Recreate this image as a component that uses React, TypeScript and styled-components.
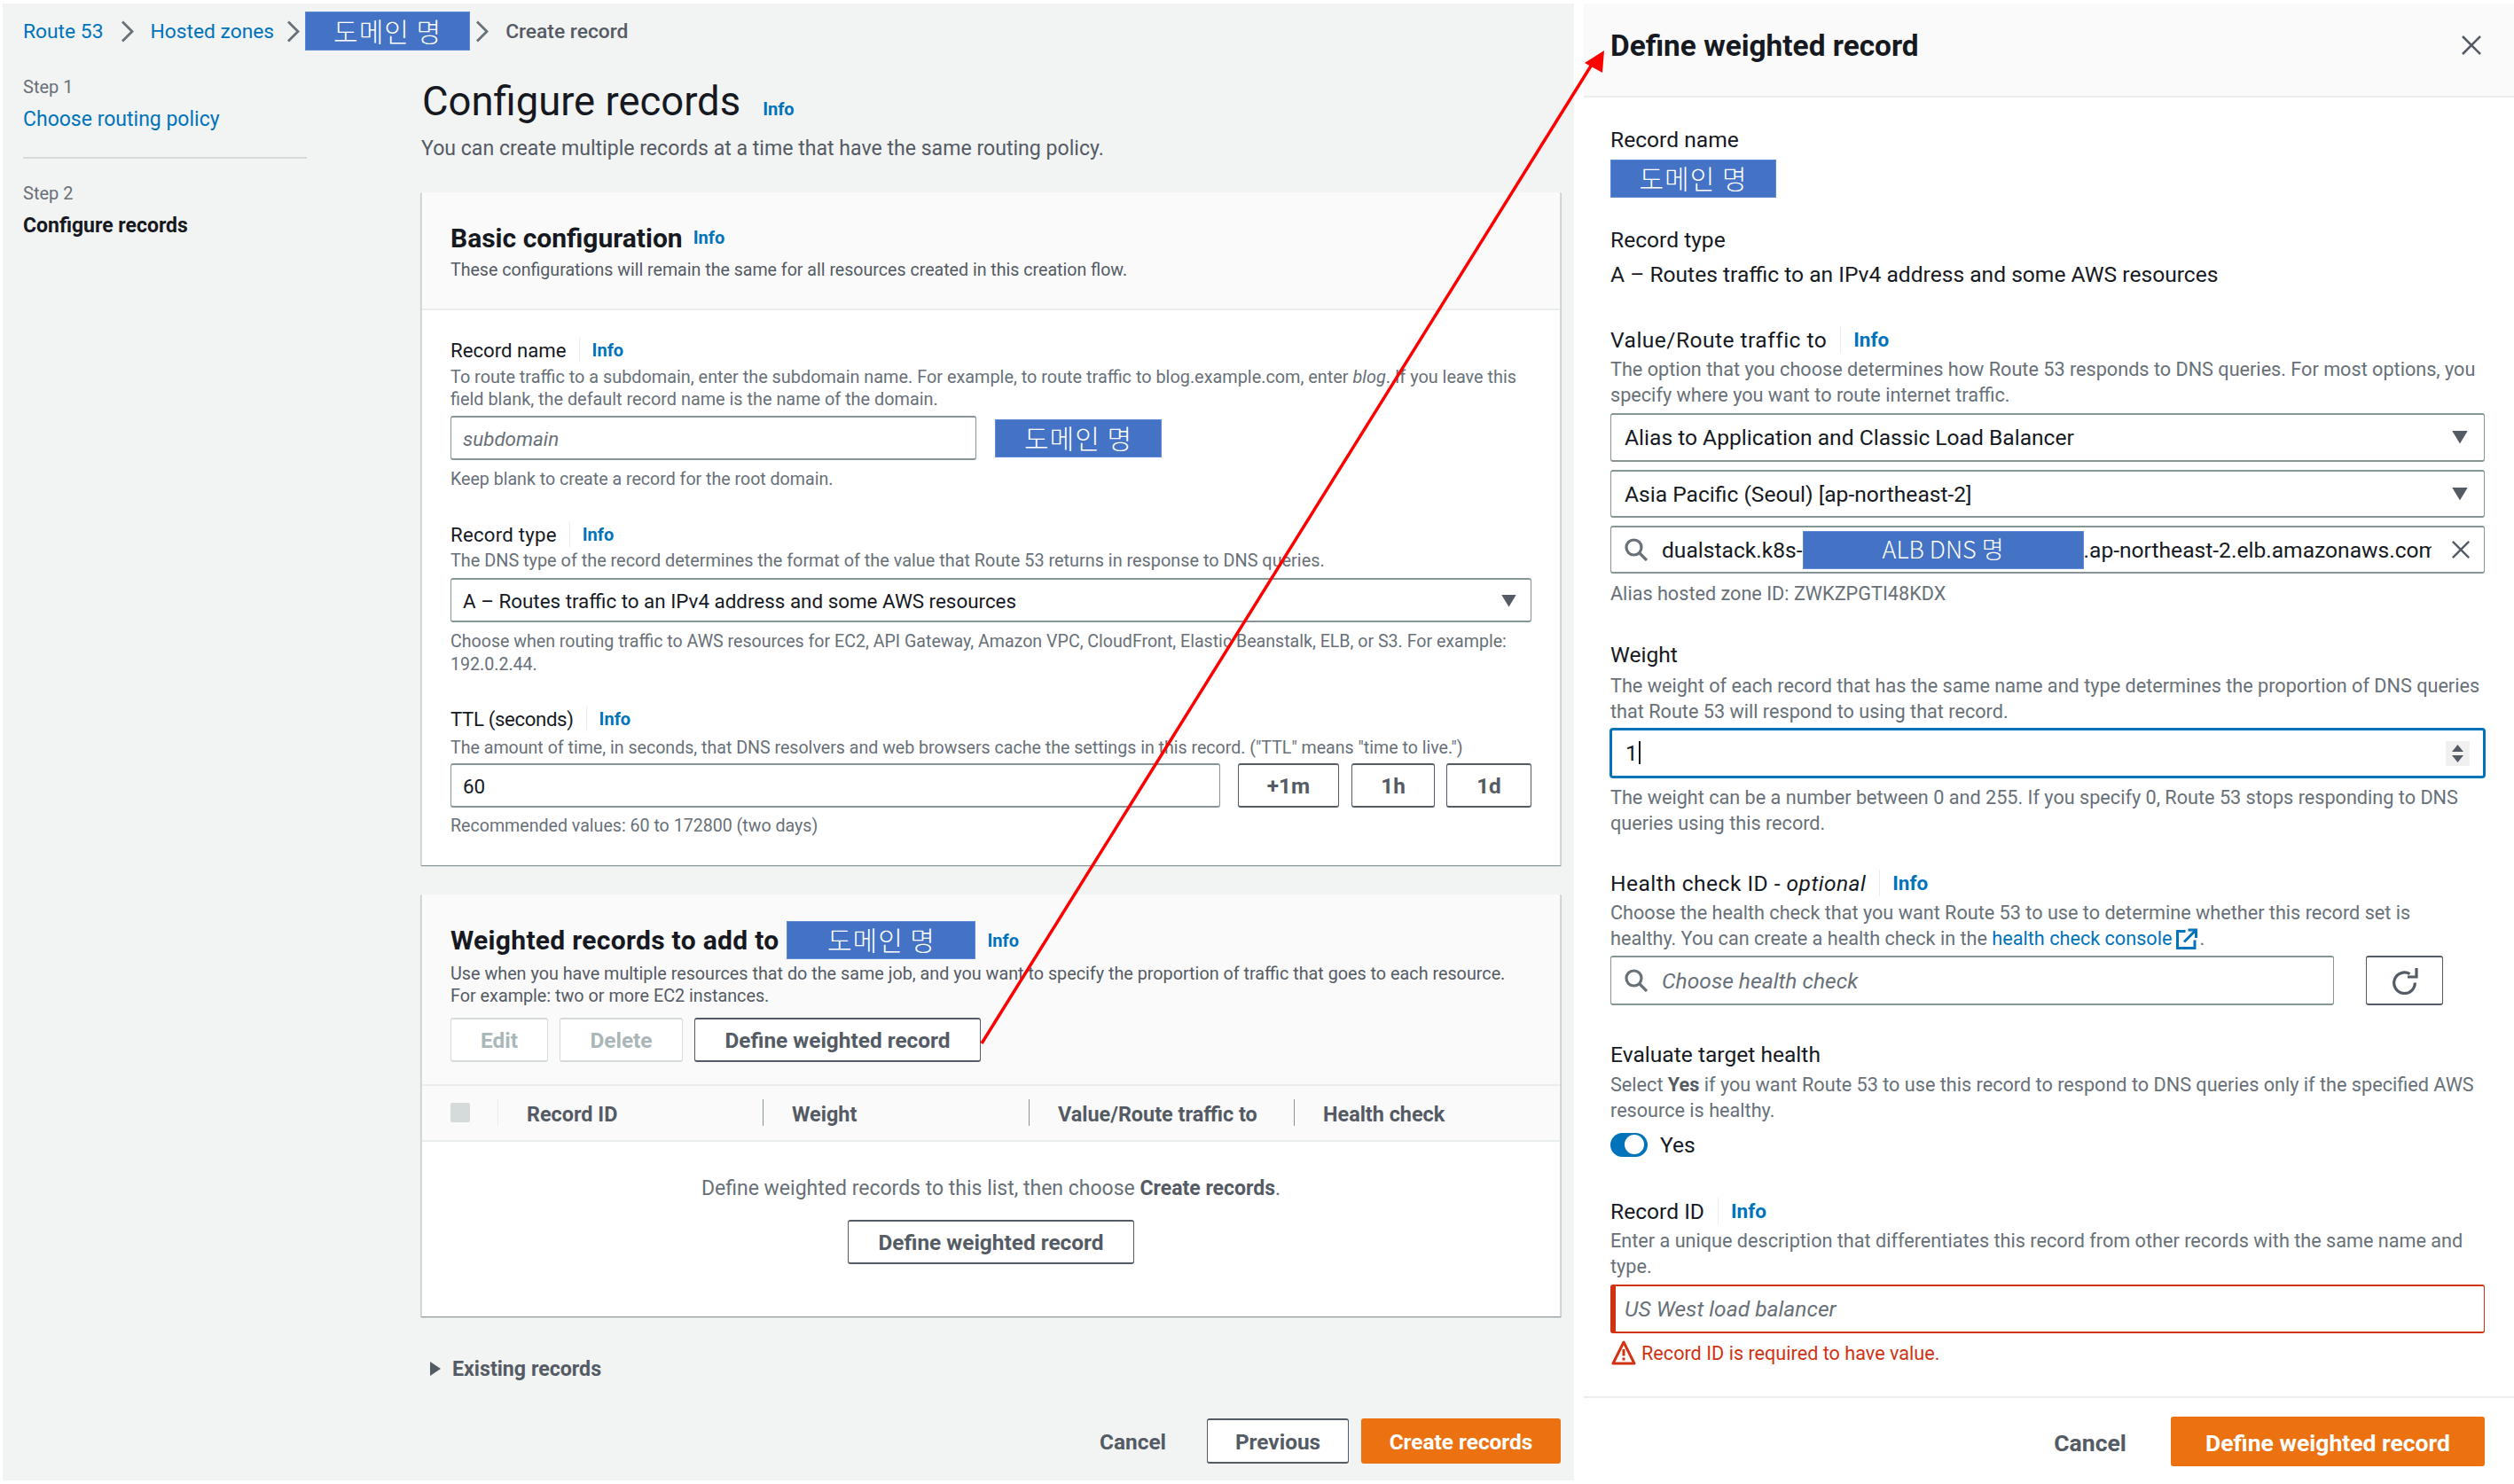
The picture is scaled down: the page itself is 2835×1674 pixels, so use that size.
import styled, { createGlobalStyle } from 'styled-components';

const GlobalStyle = createGlobalStyle`
  html, body {
    margin: 0;
    padding: 0;
    background: #fff;
  }
  * {
    box-sizing: border-box;
  }
`;

const FONT = `Roboto, "Noto Sans CJK KR", sans-serif`;
const COLORS = {
  ink: '#16191f',
  grey: '#687078',
  button: '#545b64',
  link: '#0073bb',
  border: '#879596',
  line: '#eaeded',
  orange: '#ec7211',
  red: '#d13212',
};

const Page = styled.div`
  position: relative;
  width: 2835px;
  height: 1674px;
  overflow: hidden;
  display: flex;
  padding: 4px 0 4px 3px;
  font-family: ${FONT};
  color: ${COLORS.ink};
`;

const Console = styled.div`
  width: 1772px;
  margin-right: 11px;
  padding: 9px 15px 0 23px;
  background: #f2f3f3;
`;

const Breadcrumbs = styled.nav`
  display: flex;
  align-items: center;
  height: 44px;
  font-size: 22.8px;
  color: ${COLORS.button};
`;

const Crumb = styled.a`
  color: ${COLORS.link};
`;

const CrumbCurrent = styled.span`
  margin-left: 19px;
  font-weight: 500;
  color: ${COLORS.button};
`;

const Redact = styled.span<{ $w: number; $h?: number; $size?: number }>`
  display: inline-flex;
  flex: none;
  align-items: center;
  justify-content: center;
  width: ${p => p.$w}px;
  height: ${p => p.$h ?? 43}px;
  padding-bottom: 3px;
  background: #4472c4;
  border: 1px solid #5a8ad8;
  color: #fff;
  font-family: "Noto Sans CJK KR", sans-serif;
  font-size: ${p => p.$size ?? 30}px;
  font-weight: 300;
  letter-spacing: 1px;
`;

const Columns = styled.div`
  display: flex;
  margin-top: 23px;
`;

const Steps = styled.aside`
  width: 320px;
  margin-right: 129px;
  padding-top: 3px;
`;

const StepBlock = styled.div<{ $divided?: boolean }>`
  padding-bottom: ${p => (p.$divided ? '27px' : '0')};
  margin-bottom: ${p => (p.$divided ? '24px' : '0')};
  border-bottom: ${p => (p.$divided ? `2px solid #d5dbdb` : 'none')};
`;

const StepNumber = styled.div`
  height: 30px;
  line-height: 30px;
  font-size: 20px;
  color: ${COLORS.grey};
`;

const StepName = styled.div<{ $current?: boolean }>`
  margin-top: 7px;
  height: 30px;
  line-height: 30px;
  font-size: 23px;
  font-weight: ${p => (p.$current ? 700 : 400)};
  color: ${p => (p.$current ? COLORS.ink : COLORS.link)};
`;

const Main = styled.main`
  width: 1285px;
`;

const PageTitle = styled.div`
  display: flex;
  align-items: baseline;
  height: 50px;
  line-height: 50px;
  font-size: 45.4px;
  margin: 10px 0 13px;
  padding-left: 1px;
`;

const PageSub = styled.p`
  margin: 0;
  height: 30px;
  line-height: 30px;
  font-size: 23.1px;
  color: ${COLORS.button};
`;

const Card = styled.section<{ $mt: number }>`
  margin-top: ${p => p.$mt}px;
  background: #fff;
  border-left: 1px solid #d5dbdb;
  border-right: 1px solid #d5dbdb;
  box-shadow: 0 1px 1px 0 rgba(0, 28, 36, 0.3), 1px 1px 1px 0 rgba(0, 28, 36, 0.1), -1px 1px 1px 0 rgba(0, 28, 36, 0.1);
`;

const CardHead = styled.header<{ $pt: number; $pb: number }>`
  padding: ${p => p.$pt}px 32px ${p => p.$pb}px;
  background: #fafafa;
  border-bottom: 2px solid ${COLORS.line};
`;

const CardTitle = styled.div<{ $track?: number }>`
  display: flex;
  align-items: center;
  height: 44px;
  font-size: 30px;
  font-weight: 700;
  letter-spacing: ${p => p.$track ?? 0}px;
`;

const CardDesc = styled.p<{ $mt?: number; $size?: number }>`
  margin: ${p => p.$mt ?? 2}px 0 0;
  line-height: 25.5px;
  font-size: ${p => p.$size ?? 19.6}px;
  color: ${COLORS.button};
`;

const CardBody = styled.div`
  padding: 30px 32px 31px;
`;

const InfoLink = styled.a<{ $size?: number; $ml?: number }>`
  margin-left: ${p => p.$ml ?? 14}px;
  font-size: ${p => p.$size ?? 20}px;
  font-weight: 700;
  letter-spacing: 0;
  color: ${COLORS.link};
`;

const Label = styled.div<{ $mt?: number; $track?: number }>`
  display: flex;
  align-items: center;
  height: 30px;
  margin-top: ${p => p.$mt ?? 0}px;
  font-size: 22.2px;
  letter-spacing: ${p => p.$track ?? 0}px;
`;

const LabelRule = styled.span`
  width: 1px;
  height: 28px;
  margin-left: 14px;
  background: #eaeded;
`;

const Help = styled.p<{ $mt?: number; $size?: number }>`
  margin: ${p => p.$mt ?? 2}px 0 0;
  line-height: 25.9px;
  font-size: ${p => p.$size ?? 19.6}px;
  color: ${COLORS.grey};
`;

const ControlBox = styled.div<{ $h?: number; $w?: number; $mt?: number }>`
  display: flex;
  align-items: center;
  flex: none;
  height: ${p => p.$h ?? 50}px;
  width: ${p => (p.$w ? `${p.$w}px` : '100%')};
  margin-top: ${p => p.$mt ?? 6}px;
  padding: 2px 13px 0;
  background: #fff;
  border: 1px solid ${COLORS.border};
  border-width: 2px 1px;
  border-radius: 3px;
  font-size: 22.4px;
`;

const ControlValue = styled.span`
  flex: 1;
  white-space: nowrap;
`;

const Placeholder = styled.span`
  flex: 1;
  white-space: nowrap;
  font-style: italic;
  color: ${COLORS.grey};
`;

const Row = styled.div<{ $gap?: number; $mt?: number }>`
  display: flex;
  align-items: center;
  gap: ${p => p.$gap ?? 0}px;
  margin-top: ${p => p.$mt ?? 0}px;
`;

const Btn = styled.button<{ $w: number; $h?: number; $kind?: 'normal' | 'off' | 'primary' | 'text'; $ml?: number; $mt?: number; $size?: number }>`
  flex: none;
  display: inline-flex;
  align-items: center;
  justify-content: center;
  width: ${p => p.$w}px;
  height: ${p => p.$h ?? 50}px;
  margin-left: ${p => p.$ml ?? 0}px;
  margin-top: ${p => p.$mt ?? 0}px;
  padding: 2px 0 0;
  font-family: ${FONT};
  font-size: ${p => p.$size ?? 24.4}px;
  font-weight: 700;
  border-radius: 3px;
  border: 1px solid transparent;
  border-width: 2px 1px;
  ${p => (p.$kind ?? 'normal') === 'normal' && `color: ${COLORS.button}; background: #fff; border-color: ${COLORS.button};`}
  ${p => p.$kind === 'off' && `color: #aab7b8; background: #fff; border-color: #d5dbdb;`}
  ${p => p.$kind === 'primary' && `color: #fff; background: ${COLORS.orange}; border-color: ${COLORS.orange};`}
  ${p => p.$kind === 'text' && `color: ${COLORS.button}; background: transparent;`}
`;

const TableHead = styled.div`
  display: flex;
  align-items: center;
  height: 63px;
  padding-left: 32px;
  background: #fafafa;
  border-bottom: 2px solid ${COLORS.line};
`;

const FakeCheck = styled.span`
  width: 22px;
  height: 22px;
  background: #d5dbdb;
  border-radius: 2px;
`;

const Column = styled.div<{ $w: number; $light?: boolean }>`
  display: flex;
  align-items: center;
  width: ${p => p.$w}px;
  height: 30px;
  padding: 4px 0 0 32px;
  margin-left: ${p => (p.$light ? '31px' : '0')};
  border-left: 1px solid ${p => (p.$light ? '#eaeded' : COLORS.border)};
  font-size: 23.4px;
  font-weight: 700;
  color: ${COLORS.button};
`;

const EmptyState = styled.div`
  display: flex;
  flex-direction: column;
  align-items: center;
  height: 197px;
  padding-top: 38px;
`;

const EmptyText = styled.div`
  height: 30px;
  line-height: 30px;
  margin-bottom: 20px;
  font-size: 23px;
  color: ${COLORS.grey};
  b {
    color: ${COLORS.button};
  }
`;

const Expander = styled.div`
  display: flex;
  align-items: center;
  gap: 13px;
  margin-top: 44px;
  padding-left: 10px;
  height: 30px;
  font-size: 23.2px;
  font-weight: 700;
  color: ${COLORS.button};
`;

const Actions = styled.div`
  display: flex;
  justify-content: flex-end;
  align-items: center;
  margin-top: 41px;
`;

const Drawer = styled.aside`
  width: 1049px;
  height: 100%;
  background: #fff;
`;

const DrawerHead = styled.header`
  display: flex;
  align-items: center;
  justify-content: space-between;
  height: 106px;
  padding: 0 36px 10px 30px;
  background: #fafafa;
  border-bottom: 2px solid ${COLORS.line};
  font-size: 33.4px;
  font-weight: 700;
`;

const DrawerBody = styled.div`
  padding: 31px 33px 0 30px;
  border-bottom: 2px solid ${COLORS.line};
  height: 1467px;
`;

const DLabel = styled.div<{ $mt?: number; $track?: number; $lift?: boolean }>`
  display: flex;
  align-items: center;
  height: 34px;
  margin-top: ${p => p.$mt ?? 0}px;
  padding-bottom: ${p => (p.$lift ? '2px' : '0')};
  font-size: 24.6px;
  letter-spacing: ${p => p.$track ?? 0}px;
`;

const DRule = styled.span`
  width: 1px;
  height: 30px;
  margin-left: 15px;
  background: #eaeded;
`;

const DHelp = styled.p<{ $mt?: number }>`
  margin: ${p => p.$mt ?? 2}px 0 0;
  line-height: 29px;
  font-size: 21.65px;
  color: ${COLORS.grey};
  white-space: nowrap;
  b {
    color: ${COLORS.button};
  }
  a {
    color: ${COLORS.link};
  }
`;

const DValue = styled.div`
  height: 34px;
  line-height: 34px;
  margin-top: 5px;
  font-size: 24.6px;
`;

const DControl = styled.div<{ $w?: number; $mt?: number; $state?: 'normal' | 'focus' | 'error'; $h?: number }>`
  display: flex;
  align-items: center;
  flex: none;
  height: ${p => p.$h ?? 55}px;
  width: ${p => (p.$w ? `${p.$w}px` : '100%')};
  margin-top: ${p => p.$mt ?? 5}px;
  padding: 0 15px;
  background: #fff;
  border-style: solid;
  border-width: 2px 1px;
  border-color: ${COLORS.border};
  border-radius: 3px;
  font-size: 24.6px;
  ${p => p.$state === 'focus' && `border: 3px solid ${COLORS.link}; border-radius: 4px; margin-left: -1px; width: calc(100% + 2px);`}
  ${p => p.$state === 'error' && `border-color: ${COLORS.red}; border-left-width: 6px; padding-left: 10px;`}
`;

const Clip = styled.span`
  display: block;
  width: 392px;
  overflow: hidden;
  white-space: nowrap;
  flex: none;
`;

const Caret = styled.span`
  display: inline-block;
  width: 2px;
  height: 26px;
  margin-left: 1px;
  vertical-align: -4px;
  background: ${COLORS.ink};
`;

const Spinner = styled.span`
  display: flex;
  flex-direction: column;
  align-items: center;
  justify-content: center;
  gap: 4px;
  width: 27px;
  height: 28px;
  background: #f0f0f0;
`;

const ToggleRow = styled.div`
  display: flex;
  align-items: center;
  gap: 14px;
  height: 28px;
  margin-top: 10px;
  font-size: 24.6px;
`;

const Toggle = styled.span`
  display: flex;
  align-items: center;
  justify-content: flex-end;
  width: 42px;
  height: 27px;
  padding-right: 4px;
  border-radius: 14px;
  background: ${COLORS.link};
`;

const ToggleKnob = styled.span`
  width: 22px;
  height: 22px;
  border-radius: 50%;
  background: #fff;
`;

const ErrorRow = styled.div`
  display: flex;
  align-items: center;
  gap: 6px;
  height: 30px;
  margin: 7px 0 0 1px;
  font-size: 21.65px;
  color: ${COLORS.red};
`;

const DrawerFoot = styled.footer`
  display: flex;
  justify-content: flex-end;
  align-items: center;
  padding: 21px 33px 0 0;
`;

const ArrowLayer = styled.svg`
  position: absolute;
  left: 0;
  top: 0;
  pointer-events: none;
`;

const Chevron = ({ ml = 0, mr = 0 }: { ml?: number; mr?: number }) => (
  <svg width="15" height="25" viewBox="0 0 15 25" style={{ marginLeft: ml, marginRight: mr, flex: 'none' }}>
    <path d="M2 1.5l11 11-11 11" fill="none" stroke="#687078" strokeWidth="2.8" />
  </svg>
);

const Triangle = ({ size = 17, mr = 3 }: { size?: number; mr?: number }) => (
  <svg width={size} height={size * 0.8} viewBox="0 0 17 14" style={{ marginRight: mr }}>
    <path d="M0 0h17L8.5 14z" fill="#545b64" />
  </svg>
);

const SearchIcon = () => (
  <svg width="26" height="26" viewBox="0 0 26 26" style={{ flex: 'none', marginRight: 16 }}>
    <circle cx="10.5" cy="10.5" r="8.5" fill="none" stroke="#687078" strokeWidth="3.2" />
    <path d="M16.5 16.5L25 25" stroke="#687078" strokeWidth="3.2" />
  </svg>
);

const CloseIcon = ({ size = 24, ml = 0 }: { size?: number; ml?: number | 'auto' }) => (
  <svg width={size} height={size} viewBox="0 0 24 24" style={{ flex: 'none', marginLeft: ml }}>
    <path d="M2 2l20 20M22 2L2 22" fill="none" stroke="#545b64" strokeWidth="2.6" />
  </svg>
);

const RefreshIcon = () => (
  <svg width="30" height="30" viewBox="0 0 30 30">
    <path d="M20.5 6.6A11.8 11.8 0 1 0 26.3 16.5" fill="none" stroke="#545b64" strokeWidth="3.2" />
    <path d="M18 10h10V0" fill="none" stroke="#545b64" strokeWidth="3.2" />
  </svg>
);

const ExternalIcon = () => (
  <svg width="24" height="24" viewBox="0 0 24 24" style={{ margin: '0 2px -5px 5px' }}>
    <path d="M10.5 3.5H1.5v19h19.5v-9" fill="none" stroke="#0073bb" strokeWidth="3" />
    <path d="M9 15.5L21 3.5M13.5 2h9v9" fill="none" stroke="#0073bb" strokeWidth="3" />
  </svg>
);

const WarningIcon = () => (
  <svg width="28" height="28" viewBox="0 0 28 28" style={{ flex: 'none' }}>
    <path d="M14 2L2 26h24z" fill="none" stroke="#d13212" strokeWidth="3" strokeLinejoin="round" />
    <path d="M14 10v7.5M14 19.5v3" stroke="#d13212" strokeWidth="3" />
  </svg>
);

const Domain = styled(Redact).attrs({ children: '도메인 명' })``;

export default function App() {
  return (
    <Page>
      <GlobalStyle />
      <Console>
        <Breadcrumbs>
          <Crumb>Route 53</Crumb>
          <Chevron ml={20} mr={18} />
          <Crumb>Hosted zones</Crumb>
          <Chevron ml={14} mr={6} />
          <Domain $w={186} $h={44} />
          <Chevron ml={6} />
          <CrumbCurrent>Create record</CrumbCurrent>
        </Breadcrumbs>
        <Columns>
          <Steps>
            <StepBlock $divided>
              <StepNumber>Step 1</StepNumber>
              <StepName>Choose routing policy</StepName>
            </StepBlock>
            <StepNumber>Step 2</StepNumber>
            <StepName $current>Configure records</StepName>
          </Steps>
          <Main>
            <PageTitle>
              Configure records
              <InfoLink $ml={25}>Info</InfoLink>
            </PageTitle>
            <PageSub>You can create multiple records at a time that have the same routing policy.</PageSub>

            <Card $mt={34}>
              <CardHead $pt={29} $pb={30}>
                <CardTitle>
                  Basic configuration
                  <InfoLink $ml={12}>Info</InfoLink>
                </CardTitle>
                <CardDesc>These configurations will remain the same for all resources created in this creation flow.</CardDesc>
              </CardHead>
              <CardBody>
                <Label>
                  Record name
                  <LabelRule />
                  <InfoLink>Info</InfoLink>
                </Label>
                <Help $size={19.85} $mt={3}>
                  To route traffic to a subdomain, enter the subdomain name. For example, to route traffic to blog.example.com, enter <i>blog</i>. If you leave this field blank, the default record name is the name of the domain.
                </Help>
                <Row $gap={21} $mt={5}>
                  <ControlBox $w={593} $mt={0}>
                    <Placeholder>subdomain</Placeholder>
                  </ControlBox>
                  <Domain $w={188} />
                </Row>
                <Help $mt={9}>Keep blank to create a record for the root domain.</Help>

                <Label $mt={34} $track={0.25}>
                  Record type
                  <LabelRule />
                  <InfoLink>Info</InfoLink>
                </Label>
                <Help $size={19.85}>The DNS type of the record determines the format of the value that Route 53 returns in response to DNS queries.</Help>
                <ControlBox>
                  <ControlValue>A – Routes traffic to an IPv4 address and some AWS resources</ControlValue>
                  <Triangle />
                </ControlBox>
                <Help $mt={9}>
                  Choose when routing traffic to AWS resources for EC2, API Gateway, Amazon VPC, CloudFront, Elastic Beanstalk, ELB, or S3. For example: 192.0.2.44.
                </Help>

                <Label $mt={33} $track={-0.35}>
                  TTL (seconds)
                  <LabelRule />
                  <InfoLink>Info</InfoLink>
                </Label>
                <Help $mt={5}>The amount of time, in seconds, that DNS resolvers and web browsers cache the settings in this record. ("TTL" means "time to live.")</Help>
                <Row $mt={4}>
                  <ControlBox $w={868} $mt={0}>
                    <ControlValue>60</ControlValue>
                  </ControlBox>
                  <Btn $w={114} $ml={20}>+1m</Btn>
                  <Btn $w={94} $ml={14}>1h</Btn>
                  <Btn $w={96} $ml={13}>1d</Btn>
                </Row>
                <Help $mt={8}>Recommended values: 60 to 172800 (two days)</Help>
              </CardBody>
            </Card>

            <Card $mt={33}>
              <CardHead $pt={30} $pb={25}>
                <CardTitle $track={0.3}>
                  Weighted records to add to
                  <Domain $w={213} style={{ marginLeft: 9 }} />
                  <InfoLink $ml={13}>Info</InfoLink>
                </CardTitle>
                <CardDesc $mt={3} $size={19.78}>
                  Use when you have multiple resources that do the same job, and you want to specify the proportion of traffic that goes to each resource.
                  <br />
                  For example: two or more EC2 instances.
                </CardDesc>
                <Row $mt={11}>
                  <Btn $w={110} $kind="off">Edit</Btn>
                  <Btn $w={139} $kind="off" $ml={13}>Delete</Btn>
                  <Btn $w={323} $ml={13}>Define weighted record</Btn>
                </Row>
              </CardHead>
              <TableHead>
                <FakeCheck />
                <Column $w={299} $light>Record ID</Column>
                <Column $w={300}>Weight</Column>
                <Column $w={299}>Value/Route traffic to</Column>
                <Column $w={270}>Health check</Column>
              </TableHead>
              <EmptyState>
                <EmptyText>
                  Define weighted records to this list, then choose <b>Create records</b>.
                </EmptyText>
                <Btn $w={323}>Define weighted record</Btn>
              </EmptyState>
            </Card>

            <Expander>
              <svg width="12" height="16" viewBox="0 0 12 16">
                <path d="M0 0l12 8-12 8z" fill="#545b64" />
              </svg>
              Existing records
            </Expander>

            <Actions>
              <Btn $w={71} $h={51} $kind="text">Cancel</Btn>
              <Btn $w={160} $h={51} $ml={48}>Previous</Btn>
              <Btn $w={225} $h={51} $kind="primary" $ml={14}>Create records</Btn>
            </Actions>
          </Main>
        </Columns>
      </Console>

      <Drawer>
        <DrawerHead>
          Define weighted record
          <CloseIcon />
        </DrawerHead>
        <DrawerBody>
          <DLabel $lift>Record name</DLabel>
          <Row $mt={5}>
            <Domain $w={187} />
          </Row>

          <DLabel $mt={31} $lift>Record type</DLabel>
          <DValue>A – Routes traffic to an IPv4 address and some AWS resources</DValue>

          <DLabel $mt={39} $track={0.45}>
            Value/Route traffic to
            <DRule />
            <InfoLink $size={22.5}>Info</InfoLink>
          </DLabel>
          <DHelp>
            The option that you choose determines how Route 53 responds to DNS queries. For most options, you
            <br />
            specify where you want to route internet traffic.
          </DHelp>
          <DControl $mt={6}>
            <ControlValue>Alias to Application and Classic Load Balancer</ControlValue>
            <Triangle size={18} />
          </DControl>
          <DControl $mt={9} $h={54}>
            <ControlValue>Asia Pacific (Seoul) [ap-northeast-2]</ControlValue>
            <Triangle size={18} />
          </DControl>
          <DControl $mt={9} $h={54}>
            <SearchIcon />
            <span>dualstack.k8s-</span>
            <Redact $w={317} $size={27} style={{ letterSpacing: 0 }}>ALB DNS 명</Redact>
            <Clip>.ap-northeast-2.elb.amazonaws.com</Clip>
            <CloseIcon size={22} ml="auto" />
          </DControl>
          <DHelp $mt={8}>Alias hosted zone ID: ZWKZPGTI48KDX</DHelp>

          <DLabel $mt={38} $lift>Weight</DLabel>
          <DHelp $mt={3}>
            The weight of each record that has the same name and type determines the proportion of DNS queries
            <br />
            that Route 53 will respond to using that record.
          </DHelp>
          <DControl $h={57} $state="focus" $mt={4}>
            <ControlValue>
              1
              <Caret />
            </ControlValue>
            <Spinner>
              <svg width="13" height="8" viewBox="0 0 13 8"><path d="M0 8h13L6.5 0z" fill="#545b64" /></svg>
              <svg width="13" height="8" viewBox="0 0 13 8"><path d="M0 0h13L6.5 8z" fill="#545b64" /></svg>
            </Spinner>
          </DControl>
          <DHelp $mt={7}>
            The weight can be a number between 0 and 255. If you specify 0, Route 53 stops responding to DNS
            <br />
            queries using this record.
          </DHelp>

          <DLabel $mt={36} $track={0.45}>
            Health check ID -&nbsp;<i>optional</i>
            <DRule />
            <InfoLink $size={22.5}>Info</InfoLink>
          </DLabel>
          <DHelp $mt={2}>
            Choose the health check that you want Route 53 to use to determine whether this record set is
            <br />
            healthy. You can create a health check in the <a>health check console</a>
            <ExternalIcon />.
          </DHelp>
          <Row>
            <DControl $w={816} $mt={5} $h={56}>
              <SearchIcon />
              <Placeholder>Choose health check</Placeholder>
            </DControl>
            <Btn $w={87} $h={56} $ml={36} $mt={5}>
              <RefreshIcon />
            </Btn>
          </Row>

          <DLabel $mt={39} $lift>Evaluate target health</DLabel>
          <DHelp>
            Select <b>Yes</b> if you want Route 53 to use this record to respond to DNS queries only if the specified AWS
            <br />
            resource is healthy.
          </DHelp>
          <ToggleRow>
            <Toggle>
              <ToggleKnob />
            </Toggle>
            Yes
          </ToggleRow>

          <DLabel $mt={44}>
            Record ID
            <DRule />
            <InfoLink $size={22.5}>Info</InfoLink>
          </DLabel>
          <DHelp>
            Enter a unique description that differentiates this record from other records with the same name and
            <br />
            type.
          </DHelp>
          <DControl $state="error" $mt={6}>
            <Placeholder>US West load balancer</Placeholder>
          </DControl>
          <ErrorRow>
            <WarningIcon />
            Record ID is required to have value.
          </ErrorRow>
        </DrawerBody>
        <DrawerFoot>
          <Btn $w={78} $h={56} $kind="text" $size={26.5}>Cancel</Btn>
          <Btn $w={354} $h={56} $kind="primary" $ml={52} $size={26.5}>Define weighted record</Btn>
        </DrawerFoot>
      </Drawer>

      <ArrowLayer width="2835" height="1674" viewBox="0 0 2835 1674">
        <path d="M1107 1177L1798 68" fill="none" stroke="#fe0000" strokeWidth="3.5" />
        <path d="M1809 57l-22 14 20 11z" fill="#fe0000" />
      </ArrowLayer>
    </Page>
  );
}
